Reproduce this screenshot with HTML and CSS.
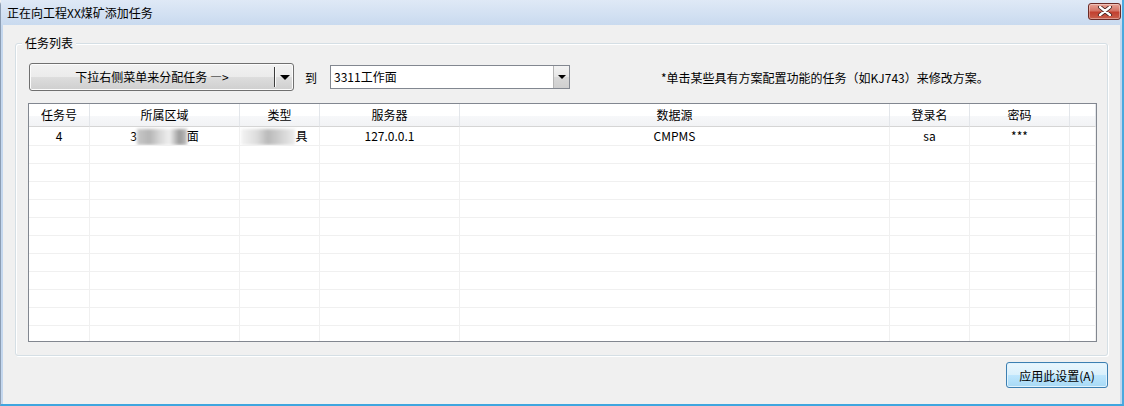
FILE: index.html
```html
<!DOCTYPE html>
<html lang="zh-CN">
<head>
<meta charset="utf-8">
<title>正在向工程XX煤矿添加任务</title>
<link rel="stylesheet" href="styles.css">
</head>
<body>
<div class="window">
  <div class="titlebar">
    <span class="title">正在向工程XX煤矿添加任务</span>
    <div class="close">
      <svg width="16" height="10" viewBox="0 0 16 10"><path d="M3 1 L13 9 M13 1 L3 9" stroke="#3a1a16" stroke-width="4" stroke-linecap="round"/><path d="M3 1 L13 9 M13 1 L3 9" stroke="#ffffff" stroke-width="2.4" stroke-linecap="round"/></svg>
    </div>
  </div>
  <div class="client">
    <div class="group">
      <span class="group-label">任务列表</span>
      <div class="toolbar">
        <div class="split">
          <span class="split-main">下拉右侧菜单来分配任务 —&gt;</span>
          <span class="split-arrow"><span class="tri"></span></span>
        </div>
        <span class="to">到</span>
        <div class="combo">
          <span class="combo-text">3311工作面</span>
          <span class="combo-btn"><span class="tri small"></span></span>
        </div>
        <span class="note">*单击某些具有方案配置功能的任务（如KJ743）来修改方案。</span>
      </div>
      <div class="table">
        <div class="row head">
          <span>任务号</span><span>所属区域</span><span>类型</span><span>服务器</span><span>数据源</span><span>登录名</span><span>密码</span><span></span>
        </div>
        <div class="row">
          <span>4</span><span>3<i class="blur b1"></i>面</span><span><i class="blur b2"></i>具</span><span>127.0.0.1</span><span>CMPMS</span><span>sa</span><span>***</span><span></span>
        </div>
        <div class="row"><span></span><span></span><span></span><span></span><span></span><span></span><span></span><span></span></div>
        <div class="row"><span></span><span></span><span></span><span></span><span></span><span></span><span></span><span></span></div>
        <div class="row"><span></span><span></span><span></span><span></span><span></span><span></span><span></span><span></span></div>
        <div class="row"><span></span><span></span><span></span><span></span><span></span><span></span><span></span><span></span></div>
        <div class="row"><span></span><span></span><span></span><span></span><span></span><span></span><span></span><span></span></div>
        <div class="row"><span></span><span></span><span></span><span></span><span></span><span></span><span></span><span></span></div>
        <div class="row"><span></span><span></span><span></span><span></span><span></span><span></span><span></span><span></span></div>
        <div class="row"><span></span><span></span><span></span><span></span><span></span><span></span><span></span><span></span></div>
        <div class="row"><span></span><span></span><span></span><span></span><span></span><span></span><span></span><span></span></div>
        <div class="row"><span></span><span></span><span></span><span></span><span></span><span></span><span></span><span></span></div>
        <div class="row"><span></span><span></span><span></span><span></span><span></span><span></span><span></span><span></span></div>
      </div>
    </div>
    <div class="footer">
      <button class="apply">应用此设置(A)</button>
    </div>
  </div>
</div>
</body>
</html>
```

FILE: styles.css
```css
* { box-sizing: border-box; }
html, body {
  margin: 0;
  padding: 0;
  width: 1124px;
  height: 406px;
  overflow: hidden;
  background: #f0f0f0;
  font-family: "Noto Sans CJK SC", "Noto Sans", sans-serif;
  font-size: 12px;
  color: #000;
}
.window {
  width: 1124px;
  height: 406px;
  display: flex;
  flex-direction: column;
  background: linear-gradient(#dbe7f5, #c4d7ee 30px, #c4d7ee);
  border-left: 1px solid #8c9db3;
  border-right: 2px solid #4aa9de;
  border-bottom: 2px solid #3fa6df;
  border-top-left-radius: 5px;
}
.titlebar {
  height: 25px;
  flex: none;
  display: flex;
  align-items: center;
  justify-content: space-between;
  padding: 0 1px 0 6px;
  background: linear-gradient(#dfe9f6, #c9daef);
}
.title {
  line-height: 25px;
  font-size: 12px;
  color: #000;
}
.close {
  width: 33px;
  height: 17px;
  margin-top: -3px;
  border: 1px solid #6b2a26;
  border-radius: 3px;
  background: linear-gradient(#e8a497, #d47466 45%, #c2402f 55%, #c9604d);
  box-shadow: inset 0 0 0 1px rgba(255,255,255,0.35);
  display: flex;
  align-items: center;
  justify-content: center;
}
.client {
  flex: 1;
  margin: 0 2px 0 2px;
  background: #f0f0f0;
  display: flex;
  flex-direction: column;
  padding: 18px 0 0 12px;
}
.group {
  position: relative;
  width: 1093px;
  height: 313px;
  border: 1px solid #d5dfe5;
  box-shadow: inset 1px 1px 0 #ffffff, 1px 1px 0 #ffffff;
  border-radius: 3px;
  padding: 19px 10px 13px 12px;
  display: flex;
  flex-direction: column;
  gap: 12px;
}
.group-label {
  position: absolute;
  top: -9px;
  left: 6px;
  padding: 0 3px;
  background: #f0f0f0;
  line-height: 16px;
}
.toolbar {
  height: 28px;
  display: flex;
  align-items: center;
  flex: none;
}
.split {
  margin-left: 1px;
  width: 265px;
  height: 28px;
  display: flex;
  border: 1px solid #707070;
  border-radius: 3px;
  background: linear-gradient(#f2f2f2, #ebebeb 50%, #dddddd 51%, #cfcfcf);
  box-shadow: inset 0 0 0 1px #fcfcfc;
}
.split-main {
  width: 245px;
  display: flex;
  align-items: center;
  justify-content: center;
  border-right: 1px solid #3c3c3c;
  margin: 3px 0;
  line-height: 20px;
  font-size: 12px;
}
.split-arrow {
  flex: 1;
  display: flex;
  align-items: center;
  justify-content: center;
  border-left: 1px solid #fafafa;
  margin: 3px 0;
}
.tri {
  width: 0;
  height: 0;
  border-left: 5px solid transparent;
  border-right: 5px solid transparent;
  border-top: 5px solid #000;
}
.tri.small {
  border-left-width: 4px;
  border-right-width: 4px;
  border-top-width: 4px;
}
.to {
  margin-left: 11px;
}
.combo {
  margin-left: 13px;
  width: 240px;
  height: 24px;
  border: 1px solid #828790;
  background: #fff;
  display: flex;
}
.combo-text {
  flex: 1;
  padding-left: 3px;
  line-height: 22px;
}
.combo-btn {
  width: 16px;
  border-left: 1px solid #b5b5b5;
  background: linear-gradient(#f3f3f3, #e6e6e6 50%, #d8d8d8 51%, #cfcfcf);
  display: flex;
  align-items: center;
  justify-content: center;
}
.note {
  margin-left: 91px;
  color: #000;
}
.table {
  width: 1069px;
  height: 239px;
  flex: none;
  border: 1px solid #828790;
  background: #fff;
  overflow: hidden;
}
.row {
  display: grid;
  grid-template-columns: 61px 150px 80px 140px 430px 80px 100px 26px;
  height: 18px;
}
.row > span {
  border-right: 1px solid #f0f0f0;
  border-bottom: 1px solid #f0f0f0;
  text-align: center;
  line-height: 17px;
  white-space: nowrap;
  overflow: hidden;
}
.row.head {
  height: 23px;
  background: linear-gradient(#ffffff, #ffffff 50%, #f7f8fa 51%, #f1f2f4);
}
.row.head > span {
  border-right: 1px solid #e3e6ea;
  border-bottom: 1px solid #d5d5d5;
  line-height: 22px;
}
.row.head + .row {
  height: 19px;
}
.row.head + .row > span {
  line-height: 18px;
}
.blur {
  display: inline-block;
  vertical-align: middle;
  height: 16px;
  filter: blur(1.5px);
  margin-top: -2px;
}
.blur.b1 {
  width: 50px;
  background: linear-gradient(90deg, #c8c8c8 0%, #b5b5b5 25%, #d6d6d6 45%, #f0f0f0 65%, #9a9a9a 85%, #c0c0c0 100%);
}
.blur.b2 {
  width: 54px;
  margin-left: -10px;
  background: linear-gradient(90deg, #f3f3f3 0%, #dcdcdc 30%, #b9b9b9 50%, #d8d8d8 80%, #ececec 100%);
}
.footer {
  display: flex;
  justify-content: flex-end;
  padding: 6px 12px 0 0;
}
.apply {
  width: 102px;
  height: 26px;
  font-family: "Noto Sans CJK SC", "Noto Sans", sans-serif;
  font-size: 12px;
  color: #000;
  border: 1px solid #3c7fb1;
  border-radius: 3px;
  background: linear-gradient(#eaf6fd, #d9f0fc 50%, #bee6fd 51%, #a7d9f5);
  box-shadow: inset 0 0 0 1px #e0f3fe;
  padding: 0;
}
```
